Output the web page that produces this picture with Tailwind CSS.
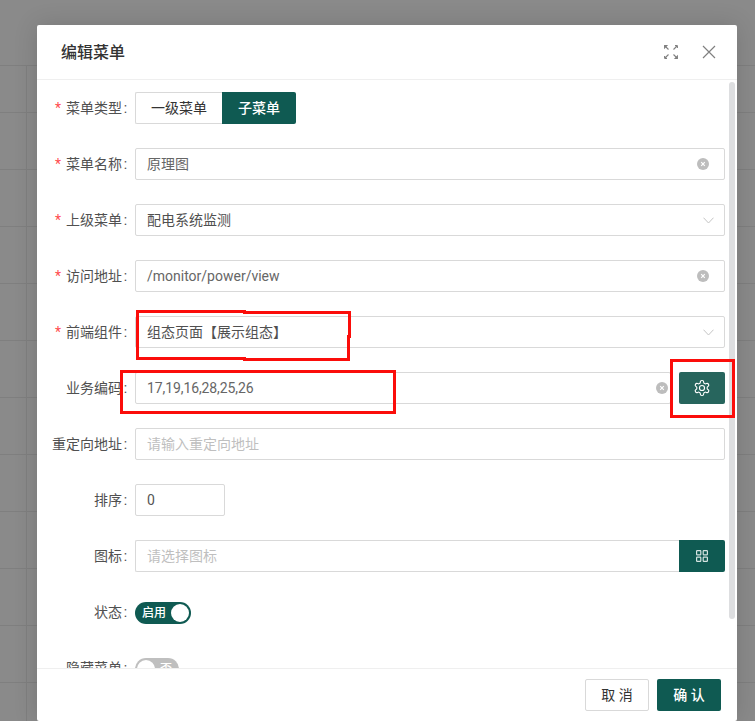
<!DOCTYPE html>
<html lang="zh-CN">
  <head>
    <meta charset="UTF-8">
    <title>编辑菜单</title>
    <script src="https://cdn.jsdelivr.net/npm/@tailwindcss/browser@4"></script>
  </head>
  <body class="bg-[#8a8a8a] font-['Roboto','Noto_Sans_CJK_SC',sans-serif] text-[14px] text-[#505050]">
    <div class="relative h-[721px] w-[755px] overflow-hidden">

      <!-- table behind the mask -->
      <div class="flex flex-col pt-[65px]">
        <div class="h-[48px] border-y border-[#7f7f7f] pl-[26px]"><div class="h-full border-l border-[#7f7f7f]"></div></div>
        <div class="h-[57px] border-b border-[#7f7f7f] pl-[26px]"><div class="h-full border-l border-[#7f7f7f]"></div></div>
        <div class="h-[57px] border-b border-[#7f7f7f] pl-[26px]"><div class="h-full border-l border-[#7f7f7f]"></div></div>
        <div class="h-[57px] border-b border-[#7f7f7f] pl-[26px]"><div class="h-full border-l border-[#7f7f7f]"></div></div>
        <div class="h-[57px] border-b border-[#7f7f7f] pl-[26px]"><div class="h-full border-l border-[#7f7f7f]"></div></div>
        <div class="h-[57px] border-b border-[#7f7f7f] pl-[26px]"><div class="h-full border-l border-[#7f7f7f]"></div></div>
        <div class="h-[57px] border-b border-[#7f7f7f] pl-[26px]"><div class="h-full border-l border-[#7f7f7f]"></div></div>
        <div class="h-[57px] border-b border-[#7f7f7f] pl-[26px]"><div class="h-full border-l border-[#7f7f7f]"></div></div>
        <div class="h-[57px] border-b border-[#7f7f7f] pl-[26px]"><div class="h-full border-l border-[#7f7f7f]"></div></div>
        <div class="h-[57px] border-b border-[#7f7f7f] pl-[26px]"><div class="h-full border-l border-[#7f7f7f]"></div></div>
        <div class="h-[57px] border-b border-[#7f7f7f] pl-[26px]"><div class="h-full border-l border-[#7f7f7f]"></div></div>
        <div class="h-[57px] pl-[26px]"><div class="h-full border-l border-[#7f7f7f]"></div></div>
      </div>

      <!-- dialog -->
      <div class="absolute left-[37px] top-[25px] flex h-[696px] w-[700px] flex-col rounded-[2px] bg-white shadow-[0_0_24px_rgba(0,0,0,0.14)]">
        <div class="flex h-[55px] shrink-0 items-center justify-between border-b border-[#efefef] pl-[24px] pr-[21px]">
          <span class="pt-[1px] text-[16px] font-medium text-[#333]">编辑菜单</span>
          <div class="flex items-center gap-[24px]">
            <svg class="h-[14px] w-[14px]" viewBox="0 0 14 14" fill="none" stroke="#808080" stroke-width="1.1">
              <path d="M1 1l3.5 3.5M13 1L9.5 4.5M1 13l3.5-3.5M13 13L9.5 9.5"/>
              <path d="M.6.6h2.2L.6 2.8zM13.4 13.4h-2.2l2.2-2.2z" fill="#808080"/>
              <path d="M13.4.6v2.4M11 .6h2.4M.6 13.4V11M.6 13.4H3"/>
            </svg>
            <svg class="h-[14px] w-[14px]" viewBox="0 0 14 14" fill="none" stroke="#808080" stroke-width="1.2">
              <path d="M1 1l12 12M13 1L1 13"/>
            </svg>
          </div>
        </div>

        <div class="relative min-h-0 flex-1 overflow-hidden pt-[12px]">
          <!-- scrollbar -->
          <div class="absolute right-[2px] top-[2px] h-[537px] w-[6px] rounded-full bg-[#dddee0]"></div>

          <div class="mb-[24px] flex h-[32px] items-center">
            <label class="flex w-[98px] shrink-0 items-center justify-end pr-[6px]"><span class="mr-[5px] text-[#ff4d4f]">*</span>菜单类型<span class="w-[7px] text-center">:</span></label>
            <div class="flex h-[32px]">
              <div class="flex w-[87px] items-center justify-center rounded-l-[2px] border border-r-0 border-[#d9d9d9] text-[#333]">一级菜单</div>
              <div class="flex w-[74px] items-center justify-center rounded-r-[2px] bg-[#0f5a52] font-medium text-white">子菜单</div>
            </div>
          </div>

          <div class="mb-[24px] flex h-[32px] items-center">
            <label class="flex w-[98px] shrink-0 items-center justify-end pr-[6px]"><span class="mr-[5px] text-[#ff4d4f]">*</span>菜单名称<span class="w-[7px] text-center">:</span></label>
            <div class="flex h-[32px] w-[590px] items-center justify-between rounded-[2px] border border-[#d9d9d9] pl-[11px] pr-[15px]">
              <span class="text-[#666]">原理图</span>
              <svg class="h-[12px] w-[12px]" viewBox="0 0 12 12"><circle cx="6" cy="6" r="6" fill="#bdbdbd"/><path d="M4.2 4.2l3.6 3.6M7.8 4.2L4.2 7.8" stroke="#fff" stroke-width="1.2"/></svg>
            </div>
          </div>

          <div class="mb-[24px] flex h-[32px] items-center">
            <label class="flex w-[98px] shrink-0 items-center justify-end pr-[6px]"><span class="mr-[5px] text-[#ff4d4f]">*</span>上级菜单<span class="w-[7px] text-center">:</span></label>
            <div class="flex h-[32px] w-[590px] items-center justify-between rounded-[2px] border border-[#d9d9d9] pl-[11px] pr-[10px]">
              <span>配电系统监测</span>
              <svg class="h-[7px] w-[11px]" viewBox="0 0 11 7" fill="none" stroke="#c4c4c4" stroke-width="1"><path d="M.5.7l5 5.3 5-5.3"/></svg>
            </div>
          </div>

          <div class="mb-[24px] flex h-[32px] items-center">
            <label class="flex w-[98px] shrink-0 items-center justify-end pr-[6px]"><span class="mr-[5px] text-[#ff4d4f]">*</span>访问地址<span class="w-[7px] text-center">:</span></label>
            <div class="flex h-[32px] w-[590px] items-center justify-between rounded-[2px] border border-[#d9d9d9] pl-[11px] pr-[15px]">
              <span class="text-[#666]">/monitor/power/view</span>
              <svg class="h-[12px] w-[12px]" viewBox="0 0 12 12"><circle cx="6" cy="6" r="6" fill="#bdbdbd"/><path d="M4.2 4.2l3.6 3.6M7.8 4.2L4.2 7.8" stroke="#fff" stroke-width="1.2"/></svg>
            </div>
          </div>

          <div class="mb-[24px] flex h-[32px] items-center">
            <label class="flex w-[98px] shrink-0 items-center justify-end pr-[6px]"><span class="mr-[5px] text-[#ff4d4f]">*</span>前端组件<span class="w-[7px] text-center">:</span></label>
            <div class="flex h-[32px] w-[590px] items-center justify-between rounded-[2px] border border-[#d9d9d9] pl-[11px] pr-[10px]">
              <span>组态页面【展示组态】</span>
              <svg class="h-[7px] w-[11px]" viewBox="0 0 11 7" fill="none" stroke="#c4c4c4" stroke-width="1"><path d="M.5.7l5 5.3 5-5.3"/></svg>
            </div>
          </div>

          <div class="mb-[24px] flex h-[32px] items-center">
            <label class="flex w-[98px] shrink-0 items-center justify-end pr-[6px]">业务编码<span class="w-[7px] text-center">:</span></label>
            <div class="flex h-[32px] w-[536px] items-center justify-between rounded-[2px] border border-[#d9d9d9] pl-[11px] pr-[2px]">
              <span class="tracking-[-0.1px] text-[#666]">17,19,16,28,25,26</span>
              <svg class="h-[12px] w-[12px]" viewBox="0 0 12 12"><circle cx="6" cy="6" r="6" fill="#bdbdbd"/><path d="M4.2 4.2l3.6 3.6M7.8 4.2L4.2 7.8" stroke="#fff" stroke-width="1.2"/></svg>
            </div>
            <button class="ml-[8px] flex h-[32px] w-[46px] items-center justify-center rounded-[2px] bg-[#27655d]">
              <svg class="h-[18px] w-[18px]" viewBox="0 0 24 24" fill="none" stroke="#fff" stroke-width="1.5">
                <path d="M12.22 2h-.44a2 2 0 0 0-2 2v.18a2 2 0 0 1-1 1.73l-.43.25a2 2 0 0 1-2 0l-.15-.08a2 2 0 0 0-2.73.73l-.22.38a2 2 0 0 0 .73 2.73l.15.1a2 2 0 0 1 1 1.72v.51a2 2 0 0 1-1 1.74l-.15.09a2 2 0 0 0-.73 2.73l.22.38a2 2 0 0 0 2.73.73l.15-.08a2 2 0 0 1 2 0l.43.25a2 2 0 0 1 1 1.73V20a2 2 0 0 0 2 2h.44a2 2 0 0 0 2-2v-.18a2 2 0 0 1 1-1.73l.43-.25a2 2 0 0 1 2 0l.15.08a2 2 0 0 0 2.73-.73l.22-.39a2 2 0 0 0-.73-2.73l-.15-.08a2 2 0 0 1-1-1.74v-.5a2 2 0 0 1 1-1.74l.15-.09a2 2 0 0 0 .73-2.73l-.22-.38a2 2 0 0 0-2.73-.73l-.15.08a2 2 0 0 1-2 0l-.43-.25a2 2 0 0 1-1-1.73V4a2 2 0 0 0-2-2z"/>
                <circle cx="12" cy="12" r="3.4"/>
              </svg>
            </button>
          </div>

          <div class="mb-[24px] flex h-[32px] items-center">
            <label class="flex w-[98px] shrink-0 items-center justify-end pr-[6px]">重定向地址<span class="w-[7px] text-center">:</span></label>
            <div class="flex h-[32px] w-[590px] items-center rounded-[2px] border border-[#d9d9d9] pl-[11px] text-[#bfbfbf]">请输入重定向地址</div>
          </div>

          <div class="mb-[24px] flex h-[32px] items-center">
            <label class="flex w-[98px] shrink-0 items-center justify-end pr-[6px]">排序<span class="w-[7px] text-center">:</span></label>
            <div class="flex h-[32px] w-[90px] items-center rounded-[2px] border border-[#d9d9d9] pl-[11px] text-[#555]">0</div>
          </div>

          <div class="mb-[24px] flex h-[32px] items-center">
            <label class="flex w-[98px] shrink-0 items-center justify-end pr-[6px]">图标<span class="w-[7px] text-center">:</span></label>
            <div class="flex h-[32px] w-[544px] items-center rounded-l-[2px] border border-r-0 border-[#d9d9d9] pl-[11px] text-[#bfbfbf]">请选择图标</div>
            <button class="flex h-[32px] w-[46px] items-center justify-center rounded-r-[2px] bg-[#0f5a52]">
              <svg class="h-[12px] w-[12px]" viewBox="0 0 12 12" fill="none" stroke="#d5e3e1" stroke-width="1.2">
                <rect x=".6" y=".6" width="4.2" height="4.2" rx=".6"/><rect x="7.2" y=".6" width="4.2" height="4.2" rx=".6"/><rect x=".6" y="7.2" width="4.2" height="4.2" rx=".6"/><rect x="7.2" y="7.2" width="4.2" height="4.2" rx=".6"/>
              </svg>
            </button>
          </div>

          <div class="mb-[24px] flex h-[32px] items-center">
            <label class="flex w-[98px] shrink-0 items-center justify-end pr-[6px]">状态<span class="w-[7px] text-center">:</span></label>
            <div class="mt-[1px] flex h-[22px] w-[56px] items-center justify-between rounded-full bg-[#0f5a52] pl-[7px] pr-[2px] text-[12px] font-medium text-white">
              启用<span class="h-[18px] w-[18px] rounded-full bg-white"></span>
            </div>
          </div>

          <div class="flex h-[32px] items-center">
            <label class="flex w-[98px] shrink-0 items-center justify-end pr-[6px]">隐藏菜单<span class="w-[7px] text-center">:</span></label>
            <div class="mt-[1px] flex h-[22px] w-[44px] items-center justify-between rounded-full bg-[#bfbfbf] pl-[2px] pr-[7px] text-[12px] font-medium text-white">
              <span class="h-[18px] w-[18px] rounded-full bg-white"></span>否
            </div>
          </div>
        </div>

        <div class="flex h-[53px] shrink-0 items-center justify-end gap-[8px] border-t border-[#efefef] pr-[16px]">
          <button class="h-[32px] w-[64px] rounded-[2px] border border-[#d9d9d9] text-[#333]">取 消</button>
          <button class="h-[32px] w-[64px] rounded-[2px] bg-[#0f5a52] font-medium text-white">确 认</button>
        </div>
      </div>

      <!-- hand drawn red marks on the screenshot -->
      <svg class="absolute left-0 top-0" width="755" height="721" fill="none" stroke="#fb0d0a" stroke-width="3" shape-rendering="crispEdges">
        <path d="M137.5 358V311.5H244V312.5H349.5V336H348.5V359.5H244V358H137.5Z"/>
        <path d="M121 371.5H394.5V412H121Z"/>
        <path d="M671.5 360.5H733.5V416.5H671.5Z"/>
      </svg>
    </div>
  </body>
</html>
